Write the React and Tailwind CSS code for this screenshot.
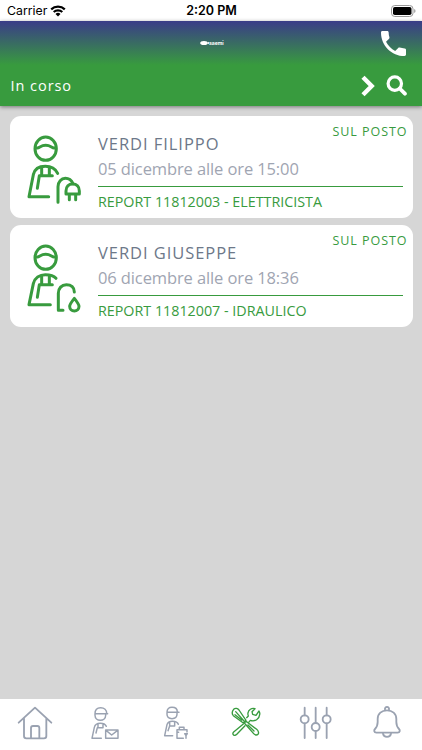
import React from "react";

function StatusBar() {
  return (
    <div className="flex h-[21px] shrink-0 items-center justify-between bg-white pl-[7px] pr-[6px] pt-px font-['Inter','Liberation_Sans',sans-serif] text-[12.5px] leading-[20px] text-black">
      <div className="flex flex-1 items-center gap-[5px]">
        <span className="w-[38px] whitespace-nowrap text-[12.3px]">Carrier</span>
        <svg width="16" height="12" viewBox="0 0 16 12">
          <path d="M1.2 4.4a9.8 9.8 0 0 1 13.6 0" fill="none" stroke="#000" strokeWidth="2.2" />
          <path d="M3.7 7.1a6.2 6.2 0 0 1 8.6 0" fill="none" stroke="#000" strokeWidth="2.1" />
          <path d="M8 11.4 5.5 8.9a3.6 3.6 0 0 1 5 0z" />
        </svg>
      </div>
      <span className="whitespace-nowrap font-semibold">2:20 PM</span>
      <div className="flex flex-1 justify-end">
        <svg width="25" height="12" viewBox="0 0 25 12">
          <rect x=".5" y=".5" width="21.5" height="11" rx="3.3" fill="none" stroke="#999" />
          <rect x="2" y="2" width="18.5" height="8" rx="1.8" />
          <path d="M23.2 4v4q1.3-.6 1.3-2t-1.3-2" fill="#999" />
        </svg>
      </div>
    </div>
  );
}

function Header() {
  return (
    <header className="z-10 h-[85px] shrink-0 bg-[linear-gradient(#3a3c88_0px,#389b3e_44px)] text-white shadow-[0_1px_4px_rgba(0,0,0,0.45)]">
      <div className="flex h-[44px] items-center pl-[200px] pr-[16px]">
        <div className="flex h-[8px] items-center">
          <svg width="9" height="6" viewBox="0 0 9 6">
            <ellipse cx="4" cy="3" rx="3.8" ry="2" fill="#fff" />
            <path d="M7 3 9 1.8v2.4z" fill="#fff" />
          </svg>
          <span className="font-['Inter',sans-serif] text-[5px] font-bold leading-[6px]">saemi</span>
        </div>
        <svg className="ml-auto" width="25" height="25" viewBox="3 3 18 18" fill="#fff">
          <path d="M6.62 10.79c1.44 2.83 3.76 5.14 6.59 6.59l2.2-2.2c.27-.27.67-.36 1.02-.24 1.12.37 2.33.57 3.57.57.55 0 1 .45 1 1V20c0 .55-.45 1-1 1-9.39 0-17-7.61-17-17 0-.55.45-1 1-1h3.5c.55 0 1 .45 1 1 0 1.25.2 2.45.57 3.57.11.35.03.74-.25 1.02z" />
        </svg>
      </div>
      <div className="flex h-[41px] items-center pl-[10.5px] pr-[15.5px]">
        <span className="text-[14.5px] leading-5 tracking-[0.95px]">In corso</span>
        <svg className="ml-auto mr-[11px]" width="14" height="22" viewBox="0 0 14 22" fill="none" stroke="#fff" strokeWidth="4.4">
          <path d="M2 2.2 10.7 11 2 19.8" />
        </svg>
        <svg width="21" height="21" viewBox="0 0 21 21" fill="none" stroke="#fff">
          <circle cx="8.8" cy="8.6" r="6.7" strokeWidth="3.2" />
          <path d="m13.7 13.5 5.2 5.2" strokeWidth="3.8" strokeLinecap="round" />
        </svg>
      </div>
    </header>
  );
}

function WorkerIcon({ trade }) {
  return (
    <svg className="ml-[5.5px] mt-[9px] shrink-0" width="75" height="85" viewBox="0 0 225 255" fill="none" stroke="#389b3e" strokeWidth="9" strokeLinecap="round" strokeLinejoin="round">
      <ellipse cx="92" cy="71" rx="32" ry="35" />
      <path d="M62 69h5c7 0 10-8 25-8s18 8 25 8h5" />
      <path d="M80 128v24M103 128v24M67 190l6-38h39" />
      {trade === "electric" ? (
        <>
          <path d="M101 215H42l13-66c4-17 19-25 36-25 17 0 30 7 37 21" />
          <path d="M129 232v-47c0-14 10-25 22-25 11 0 19 7 23 16" />
          <path d="M153 207v-9c0-13 8-21 20-21s20 8 20 21v9zM163 209v15M182 209v15" />
        </>
      ) : (
        <>
          <path d="M106 212H42l13-63c4-17 19-27 36-27 14 0 25 3 32 11" />
          <path d="M144 229h-14v-51c0-15 10-26 24-26 15 0 24 9 24 22" />
          <path d="M178 193c8 10 14 18 14 24a14 14 0 0 1-28 0c0-6 6-14 14-24z" />
        </>
      )}
    </svg>
  );
}

function JobCard({ name, date, report, trade }) {
  return (
    <article className="flex h-[102px] rounded-[11px] bg-white">
      <WorkerIcon trade={trade} />
      <div className="ml-[8px] flex flex-1 flex-col pr-[5px] whitespace-nowrap">
        <div className="h-[19px] pt-[7px] text-right text-[12.5px] leading-[18px] tracking-[0.95px] text-[#389b3e]">SUL POSTO</div>
        <div className="h-[21px] text-[16.5px] leading-[18px] tracking-[0.95px] text-[#6d7889]">{name}</div>
        <div className="mr-[5px] h-[31px] border-b border-[#389b3e] text-[16.5px] leading-[25px] tracking-[-0.11px] text-[#9fa5b2]">{date}</div>
        <div className="pt-[5px] text-[14.3px] leading-[20px] text-[#389b3e]">{report}</div>
      </div>
    </article>
  );
}

function NavItem({ viewBox, active, children }) {
  return (
    <button className="flex flex-1 justify-center">
      <svg width="40" height="50" viewBox={viewBox} fill="none" stroke={active ? "#389b3e" : "#9aa2b1"} strokeWidth="5.5" strokeLinecap="round" strokeLinejoin="round">
        {children}
      </svg>
    </button>
  );
}

function BottomNav() {
  return (
    <nav className="flex h-[51px] shrink-0 bg-white pt-px">
      <NavItem viewBox="46 15 120 150">
        <path d="m57 83 49-45 49 45M73 70v53q0 7 7 7h53q7 0 7-7V70" />
        <path d="M94 129V99q0-6 6-6h13q6 0 6 6v30" />
      </NavItem>
      <NavItem viewBox="257 15 120 150">
        <g strokeWidth="4.4">
          <path d="M287 56h38M287 56c0-12 7-18 17-18 11 0 18 7 18 17M287 57v4c0 9 7 15 16 15s16-6 16-15v-4" />
          <path d="M306 130h-28l7-33c2-8 8-12 18-12 9 0 15 3 18 9M296 86v12h15V86M290 114l4-16" />
          <path d="M319 105h37v25h-37zM320 106l17 14 18-14" />
        </g>
      </NavItem>
      <NavItem viewBox="48 15 120 150">
        <g strokeWidth="4.4">
          <path d="M81 52h36M81 52c0-10 6-15 15-15 10 0 16 5 16 14M81 54v4c0 8 6 13 15 13s15-5 15-13v-4" />
          <path d="M98 122H74l7-33c2-7 7-10 16-10s16 3 18 9M89 80v13h15V80M84 107l5-14" />
          <path d="M130 130h-19v-26h30v7M118 104v-7h14v7M111 112h5M134 116l4 6 4-6zM138 122v8" />
        </g>
      </NavItem>
      <NavItem active viewBox="257 15 120 150">
        <g strokeWidth="4">
          <path d="M280 43c5-5 12-3 16 2l21 31-8 8-30-22c-4-5-4-13 1-19zM286 50l25 28M284 59l20 16" />
          <path d="m312 84 5-5 32 24c6 5 7 12 4 15s-9 3-13-2zM323 90l18 18" />
          <path d="M344 41c-10-3-20 3-21 13-1 3 0 6 1 9l-5 5M309 87l-29 24c-5 5-1 11 4 10l4-2 26-27M325 82l5-6c14 5 27-4 28-17 1-4 0-8-2-11l-9 13-10-3-2-8 9-9" />
        </g>
      </NavItem>
      <NavItem viewBox="49 15 120 150">
        <path d="M75 38v23M75 85v44M108 38v45M108 109v20M141 38v23M141 85v44" />
        <circle cx="75" cy="73" r="12" />
        <circle cx="108" cy="96" r="12" />
        <circle cx="141" cy="73" r="12" />
      </NavItem>
      <NavItem viewBox="260 15 120 150">
        <path d="M288 113h64c7 0 8-7 4-11-6-6-8-11-8-21V72c0-16-12-26-28-26s-28 10-28 26v9c0 10-2 15-8 21-4 4-3 11 4 11z" />
        <path d="M314 44c-2-11 14-11 12 0M308 116c2 13 22 13 24 0" />
      </NavItem>
    </nav>
  );
}

export default function App() {
  return (
    <div className="flex h-[750px] w-[422px] flex-col overflow-hidden bg-[#d6d6d6] font-['Open_Sans','Noto_Sans',sans-serif]">
      <StatusBar />
      <Header />
      <main className="flex flex-1 flex-col gap-[7px] px-[9.5px] pt-[10px]">
        <JobCard name="VERDI FILIPPO" date="05 dicembre alle ore 15:00" report="REPORT 11812003 - ELETTRICISTA" trade="electric" />
        <JobCard name="VERDI GIUSEPPE" date="06 dicembre alle ore 18:36" report="REPORT 11812007 - IDRAULICO" trade="plumbing" />
      </main>
      <BottomNav />
    </div>
  );
}
